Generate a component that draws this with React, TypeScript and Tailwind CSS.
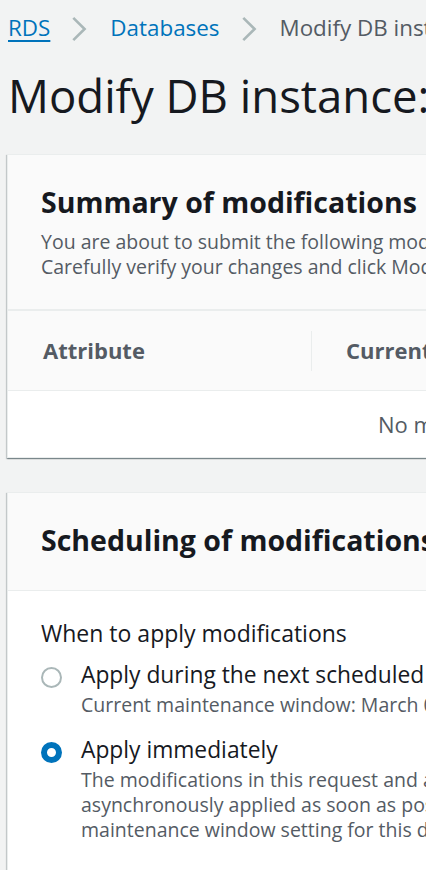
import React from "react";

function Chevron() {
  return (
    <svg width="16" height="26" viewBox="0 0 16 26" className="shrink-0 block">
      <path d="M2.3 1.8 L13.6 13 L2.3 24.2" fill="none" stroke="#aab7b8" strokeWidth="2.6" />
    </svg>
  );
}

const cardShadow =
  "shadow-[0_1px_1px_0_rgba(0,28,36,0.3),1px_1px_1px_0_rgba(0,28,36,0.15),-1px_1px_1px_0_rgba(0,28,36,0.15)]";

export default function App() {
  return (
    <div
      className="w-[426px] h-[870px] overflow-hidden bg-[#f2f3f3] text-[#16191f]"
      style={{ fontFamily: '"Open Sans", "Noto Sans", sans-serif' }}
    >
      {/* Breadcrumb */}
      <div className="flex items-center pl-[8px] mt-[14px] h-[28px] whitespace-nowrap text-[22.4px] leading-[28px]">
        <span className="text-[#0073bb] underline underline-offset-[4px] decoration-[2px]">RDS</span>
        <span className="ml-[21px] mr-[23px] mt-[2px] flex items-center">
          <Chevron />
        </span>
        <span className="text-[#0073bb]">Databases</span>
        <span className="ml-[21px] mr-[23px] mt-[2px] flex items-center">
          <Chevron />
        </span>
        <span className="text-[#545b64]">Modify DB instance</span>
      </div>

      {/* Title */}
      <h1 className="pl-[8px] mt-[26px] text-[45.5px] leading-[54px] whitespace-nowrap">Modify DB instance: database-1</h1>

      {/* Card 1 */}
      <div className={`ml-[7px] mt-[32px] w-[700px] bg-white border border-[#eaeded] ${cardShadow}`}>
        <div className="bg-[#fafafa] border-b-2 border-[#eaeded] pl-[33px] pt-[29px] pb-[30px]">
          <h2 className="text-[28.5px] leading-[36px] font-bold whitespace-nowrap">Summary of modifications</h2>
          <p className="mt-[9px] text-[19.5px] leading-[25px] text-[#545b64] whitespace-nowrap">
            You are about to submit the following modifications. Only values that will change are displayed.
            <br />
            Carefully verify your changes and click Modify DB instance.
          </p>
        </div>
        <div className="flex items-center h-[80px] bg-[#fafafa] border-b border-[#eaeded] text-[22px] font-bold text-[#545b64] whitespace-nowrap">
          <div className="w-[303px] pl-[35px]">Attribute</div>
          <div className="w-px h-[40px] bg-[#eaeded]"></div>
          <div className="pl-[34px]">Current value</div>
        </div>
        <div className="h-[66px] flex items-center pl-[370px] text-[22px] text-[#545b64] whitespace-nowrap">
          No modifications
        </div>
      </div>

      {/* Card 2 */}
      <div className={`ml-[7px] mt-[34px] w-[700px] bg-white border border-[#eaeded] ${cardShadow}`}>
        <div className="bg-[#fafafa] border-b border-[#eaeded] pl-[33px] pt-[29px] h-[98px]">
          <h2 className="text-[28.5px] leading-[36px] font-bold whitespace-nowrap">Scheduling of modifications</h2>
        </div>
        <div className="pl-[33px] pt-[27px] pb-[40px] whitespace-nowrap">
          <div className="text-[23px] leading-[30px]">When to apply modifications</div>
          <div className="mt-[12px] flex gap-[19px]">
            <div className="mt-[7px] w-[21px] h-[21px] rounded-full border-2 border-[#aab7b8] bg-white shrink-0"></div>
            <div>
              <div className="text-[22.8px] leading-[30px]">Apply during the next scheduled maintenance window</div>
              <div className="mt-[2px] text-[19.5px] leading-[25px] text-[#545b64]">
                Current maintenance window: March 06, 2021 08:07 - 08:37 UTC+1
              </div>
            </div>
          </div>
          <div className="mt-[18px] flex gap-[19px]">
            <div className="mt-[7px] w-[21px] h-[21px] rounded-full border-[6px] border-[#0073bb] bg-white shrink-0"></div>
            <div>
              <div className="text-[22.8px] leading-[30px]">Apply immediately</div>
              <div className="mt-[2px] text-[19.5px] leading-[25px] text-[#545b64]">
                The modifications in this request and any pending modifications will be
                <br />
                asynchronously applied as soon as possible, regardless of the
                <br />
                maintenance window setting for this database instance.
              </div>
            </div>
          </div>
        </div>
      </div>
    </div>
  );
}
